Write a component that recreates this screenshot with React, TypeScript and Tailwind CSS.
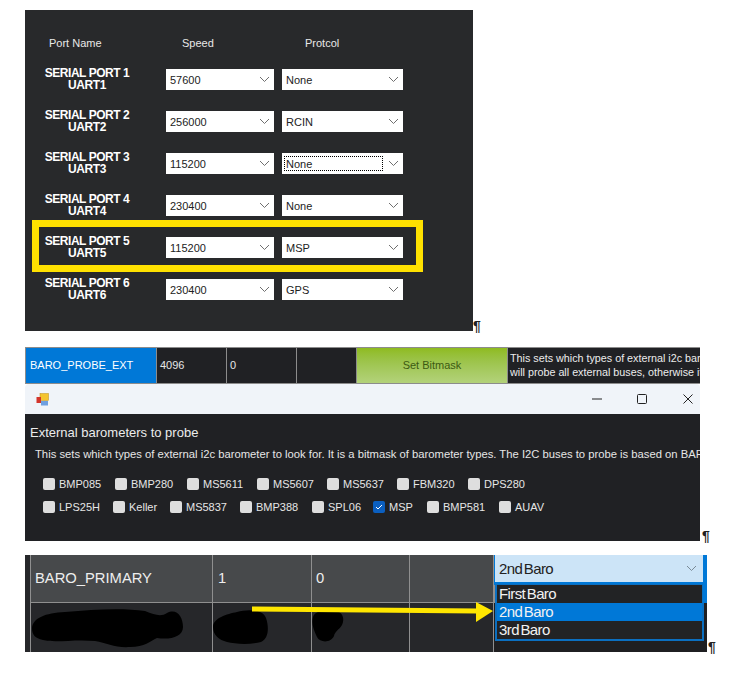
import React from "react";

const font = { fontFamily: '"Liberation Sans", Arial, sans-serif' };

function Chevron({ className = "text-[#6f6f6f]" }: { className?: string }) {
  return (
    <svg width="11" height="7" viewBox="0 0 11 7" className={className} fill="none">
      <path d="M1 1l4.5 4.5L10 1" stroke="currentColor" strokeWidth="1" />
    </svg>
  );
}

function Select({ value, width, focus }: { value: string; width: string; focus?: boolean }) {
  return (
    <div className={`${width} h-[21px] bg-white flex items-center justify-between pl-[4px] pr-[4px] text-[11px] text-[#222] relative`}>
      {focus ? (
        <span className="absolute left-[2px] top-[3px] w-[99px] h-[15px] border border-dotted border-black pl-[1px] leading-[14px]">{value}</span>
      ) : (
        <span className="leading-[22px]">{value}</span>
      )}
      <span />
      <Chevron />
    </div>
  );
}

const rows = [
  ["SERIAL PORT 1", "UART1", "57600", "None"],
  ["SERIAL PORT 2", "UART2", "256000", "RCIN"],
  ["SERIAL PORT 3", "UART3", "115200", "None"],
  ["SERIAL PORT 4", "UART4", "230400", "None"],
  ["SERIAL PORT 5", "UART5", "115200", "MSP"],
  ["SERIAL PORT 6", "UART6", "230400", "GPS"],
];

function Pilcrow({ className }: { className: string }) {
  return <span className={`text-[14px] font-bold leading-[14px] text-[#222] ${className}`}>¶</span>;
}

function SerialPanel() {
  return (
    <div className="relative w-[448px] h-[321px] bg-[#28292b] pt-[23px] text-white">
      <div className="grid grid-cols-[141px_116px_1fr] h-[20px] text-[11px] leading-[20px] text-[#e8e8e8]">
        <span className="pl-[24px]">Port Name</span>
        <span className="pl-[16px]">Speed</span>
        <span className="pl-[23px]">Protcol</span>
      </div>
      <div className="mt-[6px]">
        {rows.map((r, i) => (
          <div key={r[0]} className="grid grid-cols-[141px_116px_1fr] h-[42px] pt-[10px]">
            <div className="-mt-[2px] w-[124px] text-center text-[12px] font-bold leading-[12px] tracking-[-0.45px]">
              <div>{r[0]}</div>
              <div>{r[1]}</div>
            </div>
            <Select value={r[2]} width="w-[108px]" />
            <Select value={r[3]} width="w-[121px]" focus={i === 2} />
          </div>
        ))}
      </div>
      <div className="absolute left-[7px] top-[210px] w-[391px] h-[52px] border-[7px] border-[#ffe100] pointer-events-none" />
    </div>
  );
}

const row1 = [
  ["BMP085", "w-[72px]"],
  ["BMP280", "w-[72px]"],
  ["MS5611", "w-[70px]"],
  ["MS5607", "w-[70px]"],
  ["MS5637", "w-[70px]"],
  ["FBM320", "w-[71px]"],
  ["DPS280", "w-[70px]"],
];
const row2 = [
  ["LPS25H", "w-[70px]"],
  ["Keller", "w-[57px]"],
  ["MS5837", "w-[70px]"],
  ["BMP388", "w-[72px]"],
  ["SPL06", "w-[61px]"],
  ["MSP", "w-[54px]"],
  ["BMP581", "w-[72px]"],
  ["AUAV", "w-[70px]"],
];

function Check({ label, width }: { label: string; width: string }) {
  const on = label === "MSP";
  return (
    <div className={`${width} shrink-0 flex items-center gap-[4px] text-[11px] text-[#e6e6e6]`}>
      {on ? (
        <span className="w-[12px] h-[12px] rounded-[2px] bg-[#0b5fc0] flex items-center justify-center">
          <svg width="8" height="6" viewBox="0 0 8 6" fill="none">
            <path d="M1 3l2 2 4-4" stroke="#fff" strokeWidth="1" />
          </svg>
        </span>
      ) : (
        <span className="w-[12px] h-[12px] rounded-[2px] bg-[#dedede]" />
      )}
      <span>{label}</span>
    </div>
  );
}

function BaroPanel() {
  return (
    <div className="w-[675px] h-[194px] overflow-hidden flex flex-col">
      <div className="grid grid-cols-[130px_69px_69px_59px_150px_1fr] h-[37px] shrink-0 bg-[#8c8c8c] gap-x-[1px] pt-[1px] pb-[1px] pl-[1px] text-[11px]">
        <div className="bg-[#0078d7] text-white pl-[4px] leading-[35px]">BARO_PROBE_EXT</div>
        <div className="bg-[#202124] text-[#e6e6e6] pl-[3px] leading-[35px]">4096</div>
        <div className="bg-[#202124] text-[#e6e6e6] pl-[3px] leading-[35px]">0</div>
        <div className="bg-[#202124]" />
        <div className="bg-gradient-to-b from-[#8fbb1e] to-[#b3d27a] text-[#3c5a12] text-center leading-[35px]">Set Bitmask</div>
        <div className="bg-[#202124] text-[#ececec] pl-[2px] pt-[4px] text-[10.75px] leading-[13.5px] whitespace-nowrap overflow-hidden">
          <div>This sets which types of external i2c barometer to look for.</div>
          <div>will probe all external buses, otherwise it will probe only</div>
        </div>
      </div>
      <div className="h-[30px] shrink-0 bg-[#f0f4f9] rounded-t-[4px] flex items-center pl-[11px]">
        <svg width="13" height="13" viewBox="0 0 13 13">
          <rect x="4" y="0.5" width="8.5" height="7" fill="#f4c430" stroke="#b98f1a" strokeWidth="0.5" />
          <rect x="0.5" y="4" width="4.5" height="6" fill="#d3352b" />
          <rect x="5" y="8" width="7" height="4.5" fill="#6e9fe0" />
        </svg>
        <div className="ml-auto flex items-center text-[#222]">
          <svg width="10" height="2" viewBox="0 0 10 2" className="mr-[35px]"><path d="M0 1h10" stroke="currentColor" strokeWidth="1" /></svg>
          <svg width="10" height="10" viewBox="0 0 10 10" className="mr-[36px]"><rect x="0.5" y="0.5" width="9" height="9" rx="1" fill="none" stroke="currentColor" strokeWidth="1" /></svg>
          <svg width="10" height="10" viewBox="0 0 10 10" className="mr-[7px]"><path d="M0.5 0.5l9 9M9.5 0.5l-9 9" stroke="currentColor" strokeWidth="1" /></svg>
        </div>
      </div>
      <div className="flex-1 bg-[#202124] pt-[11px]">
        <div className="pl-[5px] text-[13px] leading-[16px] text-[#ececec]">External barometers to probe</div>
        <div className="pl-[10px] mt-[5px] text-[11.25px] leading-[16px] text-[#e6e6e6] whitespace-nowrap overflow-hidden">
          This sets which types of external i2c barometer to look for. It is a bitmask of barometer types. The I2C buses to probe is based on BARO_PROBE_EXT_PARAM
        </div>
        <div className="pl-[18px] mt-[14px] flex h-[16px]">
          {row1.map((c) => <Check key={c[0]} label={c[0]} width={c[1]} />)}
        </div>
        <div className="pl-[18px] mt-[7px] flex h-[16px]">
          {row2.map((c) => <Check key={c[0]} label={c[0]} width={c[1]} />)}
        </div>
      </div>
    </div>
  );
}

function ParamPanel() {
  const cols = "grid grid-cols-[181px_98px_97px_83px_1fr] gap-x-[1px]";
  return (
    <div className="relative w-[682px] h-[97px] bg-[#8f8f8f] pl-[5px] overflow-hidden">
      <div className="absolute left-0 top-0 w-[5px] h-full bg-[#26272a]" />
      <div className="h-[48px] pl-[1px]">
        <div className={`${cols} h-[47px] text-[14.75px] text-[#eeeeee] leading-[47px]`}>
          <div className="bg-[#47494b] pl-[4px]">BARO_PRIMARY</div>
          <div className="bg-[#47494b] pl-[5px]">1</div>
          <div className="bg-[#47494b] pl-[4px]">0</div>
          <div className="bg-[#47494b]" />
          <div className="bg-[#0078d7] pl-[1px] pr-[4px] pb-[3px] h-[30px]">
            <div className="h-[27px] bg-[#cce4f7] flex items-center justify-between pl-[4px] pr-[6px] text-[#222] text-[15px] tracking-[-0.6px] [word-spacing:-2px] leading-[27px]">
              <span>2nd Baro</span>
              <Chevron className="text-[#7a8a96]" />
            </div>
          </div>
        </div>
      </div>
      <div className="pl-[1px]">
        <div className={`${cols} h-[49px]`}>
          <div className="bg-[#26272a]" />
          <div className="bg-[#26272a]" />
          <div className="bg-[#26272a]" />
          <div className="bg-[#26272a]" />
          <div className="bg-[#1f1f21]" />
        </div>
      </div>
      <div className="absolute left-[470px] top-[29px] w-[209px] h-[57px] border-2 border-t-[1px] border-[#0b6fc0] text-[15px] tracking-[-0.6px] [word-spacing:-2px] text-[#f2f2f2]">
        <div className="h-[18px] bg-[#222325] leading-[18px] pl-[2px]">First Baro</div>
        <div className="h-[18px] bg-[#0078d7] leading-[18px] pl-[2px]">2nd Baro</div>
        <div className="h-[18px] bg-[#222325] leading-[18px] pl-[2px]">3rd Baro</div>
      </div>
      <div className="absolute right-0 top-0 w-[4px] h-[48px] bg-[#0078d7]" />
      <svg className="absolute left-0 top-0" width="682" height="97" viewBox="0 0 682 97">
        <path d="M7 73C8 63 20 58 40 57C70 54 100 53 120 56C130 60 136 62 142 58C152 53 158 62 158 72C158 82 145 85 132 83C125 86 120 92 105 92C90 93 82 88 70 86C50 84 30 88 18 85C10 83 7 80 7 73z" fill="#000" />
        <path d="M188 72c0-9 14-13 24-15 10-3 26-3 29 6 3 9 3 20-5 24-12 3-26 2-34 0-8-2-14-7-14-15z" fill="#000" />
        <path d="M288 62c2-7 14-7 21-6 9 0 11 8 8 14-3 5-7 6-8 11-3 7-14 7-17 1-3-7-6-13-4-20z" fill="#000" />
        <path d="M227 54L452 56" stroke="#ffe600" strokeWidth="5" fill="none" />
        <path d="M451 47l17 9-17 11z" fill="#ffe600" />
      </svg>
    </div>
  );
}

export default function App() {
  return (
    <div className="w-[738px] h-[681px] bg-white overflow-hidden pt-[10px] pl-[25px]" style={font}>
      <div className="flex items-end">
        <SerialPanel />
        <Pilcrow className="mb-[-2px]" />
      </div>
      <div className="flex items-end mt-[16px]">
        <BaroPanel />
        <Pilcrow className="ml-[2px] -mb-[2px]" />
      </div>
      <div className="flex items-end mt-[14px]">
        <ParamPanel />
        <Pilcrow className="ml-[1px] -mb-[2px]" />
      </div>
    </div>
  );
}
